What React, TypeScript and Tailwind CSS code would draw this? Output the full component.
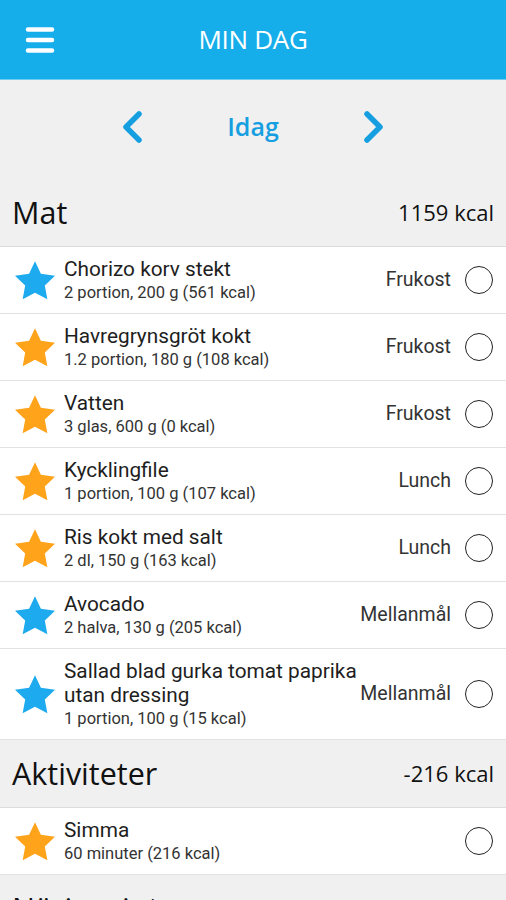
import { Menu } from "lucide-react";

type Entry = {
  title: string;
  sub: string;
  meal: string;
  fav: "blue" | "orange";
};

const food: Entry[] = [
  { title: "Chorizo korv stekt", sub: "2 portion, 200 g (561 kcal)", meal: "Frukost", fav: "blue" },
  { title: "Havregrynsgröt kokt", sub: "1.2 portion, 180 g (108 kcal)", meal: "Frukost", fav: "orange" },
  { title: "Vatten", sub: "3 glas, 600 g (0 kcal)", meal: "Frukost", fav: "orange" },
  { title: "Kycklingfile", sub: "1 portion, 100 g (107 kcal)", meal: "Lunch", fav: "orange" },
  { title: "Ris kokt med salt", sub: "2 dl, 150 g (163 kcal)", meal: "Lunch", fav: "orange" },
  { title: "Avocado", sub: "2 halva, 130 g (205 kcal)", meal: "Mellanmål", fav: "blue" },
  { title: "Sallad blad gurka tomat paprika utan dressing", sub: "1 portion, 100 g (15 kcal)", meal: "Mellanmål", fav: "blue" },
];

const activities: Entry[] = [
  { title: "Simma", sub: "60 minuter (216 kcal)", meal: "", fav: "orange" },
];

const Star = ({ color }: { color: "blue" | "orange" }) => (
  <svg viewBox="2 2 20 19.2" className="w-[40px] h-[39px] shrink-0">
    <polygon
      points="12,2 14.94,8.26 22,9.27 16.9,14.14 18.18,21.02 12,17.77 5.82,21.02 7.1,14.14 2,9.27 9.06,8.26"
      fill={color === "blue" ? "#1daaee" : "#ffa31a"}
    />
  </svg>
);

const Row = ({ e }: { e: Entry }) => (
  <div className="flex items-center min-h-[66px] pl-[15px] pr-[13px] py-[10px] bg-white border-b border-[#e2e2e2]">
    <Star color={e.fav} />
    <div className="flex-1 pl-[9px] min-w-0">
      <div className="text-[20.8px] leading-[24px] text-[#1e1e1e] max-w-[300px]">{e.title}</div>
      <div className="text-[16.5px] leading-[20px] text-[#333] mt-[2px]">{e.sub}</div>
    </div>
    <span className="text-[19.5px] text-[#333] mr-[14px]">{e.meal}</span>
    <div className="w-[28px] h-[28px] rounded-full border-[1.5px] border-[#222] shrink-0" />
  </div>
);

const SectionHeader = ({ title, kcal }: { title: string; kcal?: string }) => (
  <div className="flex items-center justify-between h-[68px] px-3 bg-[#f0f0f0] border-b border-[#dcdcdc] font-['Open_Sans',sans-serif] text-[#111]">
    <span className="text-[30.5px]">{title}</span>
    {kcal && <span className="text-[22px]">{kcal}</span>}
  </div>
);

export default function App() {
  return (
    <div className="w-[506px] h-[900px] overflow-hidden bg-[#f0f0f0] font-['Roboto',sans-serif]">
      {/* Top bar */}
      <div className="relative flex items-center justify-center h-[80px] bg-[#15aeea] border-b border-[#6fcbf1]">
        <Menu className="absolute left-[22px] top-[22px] w-[36px] h-[36px] text-white" strokeWidth={3} />
        <span className="text-white text-[26px] font-['Open_Sans',sans-serif] tracking-[-0.3px]">MIN DAG</span>
      </div>

      {/* Date navigation */}
      <div className="flex items-center justify-center h-[99px] pb-[5px] gap-[84px]">
        <svg viewBox="0 0 22 32" className="w-[22px] h-[32px]">
          <polyline points="18,3 5,16 18,29" fill="none" stroke="#169fe0" strokeWidth="5.5" strokeLinecap="round" strokeLinejoin="round" />
        </svg>
        <span className="text-[#169fe0] text-[25px] font-semibold font-['Open_Sans',sans-serif]">Idag</span>
        <svg viewBox="0 0 22 32" className="w-[22px] h-[32px]">
          <polyline points="4,3 17,16 4,29" fill="none" stroke="#169fe0" strokeWidth="5.5" strokeLinecap="round" strokeLinejoin="round" />
        </svg>
      </div>

      <SectionHeader title="Mat" kcal="1159 kcal" />
      {food.map((e) => (
        <Row key={e.title} e={e} />
      ))}

      <SectionHeader title="Aktiviteter" kcal="-216 kcal" />
      {activities.map((e) => (
        <Row key={e.title} e={e} />
      ))}

      <SectionHeader title="Näringsintag" />
    </div>
  );
}
